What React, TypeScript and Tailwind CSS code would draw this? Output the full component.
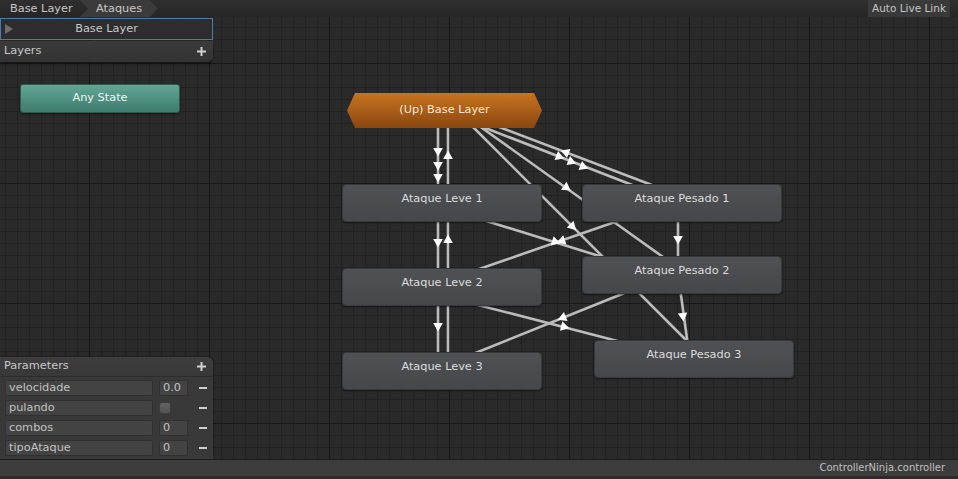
import React from "react";

type L = [number, number, number, number];
const lines: L[] = [
  [438, 120, 438, 190],
  [448, 120, 448, 190],
  [438, 215, 438, 275],
  [448, 215, 448, 275],
  [438, 300, 438, 360],
  [448, 300, 448, 360],
  [470, 122, 640, 188],
  [490, 123.5, 665, 190],
  [475, 123, 670, 262],
  [470, 124, 690, 344],
  [480, 219, 612, 260],
  [625, 218.5, 472, 271.5],
  [678, 215, 678, 265],
  [680, 288, 688, 346],
  [632, 290, 468, 356],
  [472, 303.4, 625, 343],
];

const arrows: [number, number, number][] = [
  [438, 152, 90],
  [438, 166, 90],
  [438, 178, 90],
  [448, 155, -90],
  [438, 243, 90],
  [448, 239, -90],
  [438, 327, 90],
  [560, 157, 21],
  [572, 162, 21],
  [584, 167, 21],
  [565, 152, 201],
  [567, 188, 35],
  [573, 227, 45],
  [556, 242, 17],
  [561, 241, 161],
  [678, 240, 90],
  [683, 317, 83],
  [562, 318, 158],
  [565, 327, 14.5],
];

function Plus() {
  return (
    <svg width="9" height="9" viewBox="0 0 9 9">
      <rect x="0" y="3.5" width="9" height="2" fill="#d0d0d0" />
      <rect x="3.5" y="0" width="2" height="9" fill="#d0d0d0" />
    </svg>
  );
}

function Node({ label, cls }: { label: string; cls: string }) {
  return (
    <div
      className={`absolute w-[200px] h-[38px] rounded-[4px] border border-[#38393c] bg-[linear-gradient(#4f5155,#45474b)] shadow-[0_1px_2px_rgba(0,0,0,0.5)] flex justify-center pt-[6px] leading-[16px] text-[#dcdcdc] z-10 ${cls}`}
    >
      {label}
    </div>
  );
}

function ParamRow({ name, value, check }: { name: string; value?: string; check?: boolean }) {
  return (
    <div className="h-[16px] flex items-center">
      <div className="ml-[5px] w-[148px] h-[16px] bg-[#434343] border border-[#303030] rounded-[2px] pl-[3px] leading-[14px] text-[#c2c2c2]">
        {name}
      </div>
      {check ? (
        <div className="ml-[6px] w-[29px] h-[16px] flex items-center">
          <div className="w-[12px] h-[12px] rounded-[3px] border border-[#3c3c3c] bg-[linear-gradient(#626262,#545454)]" />
        </div>
      ) : (
        <div className="ml-[6px] w-[29px] h-[16px] bg-[#434343] border border-[#303030] rounded-[2px] pl-[3px] leading-[14px] text-[#c2c2c2]">
          {value}
        </div>
      )}
      <div className="ml-[11px] w-[8px] h-[2px] bg-[#cfcfcf]" />
    </div>
  );
}

export default function App() {
  return (
    <div className="w-[958px] h-[479px] flex flex-col overflow-hidden bg-[#2a2a2a] font-['DejaVu_Sans',sans-serif] text-[11.3px] select-none">
      {/* top bar */}
      <div className="h-[17px] shrink-0 flex items-stretch bg-[linear-gradient(#2f2f2f,#262626)] text-[#c8c8c8] relative z-20">
        <div className="w-[80px] pl-[10px] flex items-center leading-none">Base Layer</div>
        <div className="w-[78px] bg-[#3b3b3b] [clip-path:polygon(0_0,70px_0,78px_50%,70px_100%,0_100%,8px_50%)] flex items-center pl-[16px] leading-none">
          Ataques
        </div>
        <div className="flex-1" />
        <div className="w-[82px] bg-[#3a3a3a] flex items-center justify-center leading-none text-[#c4c4c4] text-[10.5px]">
          Auto Live Link
        </div>
        <div className="w-[8px]" />
      </div>

      {/* main canvas */}
      <div className="relative flex-1 flex">
        <svg className="absolute inset-0" width="958" height="442" viewBox="0 0 958 442">
          <defs>
            <pattern id="minor" width="12" height="12" patternUnits="userSpaceOnUse" x="5" y="3">
              <path d="M0 0.5 H12 M0.5 0 V12" stroke="#222222" strokeWidth="1" fill="none" />
            </pattern>
            <pattern id="major" width="120" height="120" patternUnits="userSpaceOnUse" x="89" y="63">
              <path d="M0 0.5 H120 M0.5 0 V120" stroke="#181818" strokeWidth="1" fill="none" />
            </pattern>
          </defs>
          <g transform="translate(0,-17)">
            <rect x="0" y="0" width="958" height="479" fill="#2a2a2a" />
            <rect x="0" y="0" width="958" height="479" fill="url(#minor)" />
            <rect x="0" y="0" width="958" height="479" fill="url(#major)" />
            {lines.map(([x1, y1, x2, y2], i) => (
              <line key={i} x1={x1} y1={y1} x2={x2} y2={y2} stroke="#bcbcbc" strokeWidth="2.6" />
            ))}
            {arrows.map(([x, y, a], i) => (
              <polygon
                key={i}
                points="4.5,0 -4,-4.8 -4,4.8"
                fill="#ffffff"
                transform={`translate(${x},${y}) rotate(${a})`}
              />
            ))}
          </g>
        </svg>

        {/* left column */}
        <div className="relative z-20 w-[213px] flex flex-col justify-between pt-[1px]">
          <div className="flex flex-col gap-[1px]">
            <div className="h-[22px] border border-[#4a79b8] bg-[#2d2d2d] relative flex items-center justify-center text-[#c8c8c8]">
              <svg className="absolute left-[4px] top-[5px]" width="8" height="10" viewBox="0 0 8 10">
                <polygon points="0,0 8,5 0,10" fill="#6c6c6c" />
              </svg>
              Base Layer
            </div>
            <div className="h-[21px] rounded-br-[6px] bg-[linear-gradient(#3b3b3b,#333333)] shadow-[0_2px_3px_rgba(0,0,0,0.45)] flex items-center justify-between pl-[4px] pr-[7px] text-[#c8c8c8]">
              <span>Layers</span>
              <Plus />
            </div>
          </div>

          <div className="flex flex-col shadow-[0_0_3px_rgba(0,0,0,0.5)] rounded-tr-[6px]">
            <div className="h-[20px] rounded-tr-[6px] bg-[linear-gradient(#3e3e3e,#383838)] border-b border-[#2c2c2c] flex items-center justify-between pl-[4px] pr-[7px] text-[#c8c8c8]">
              <span>Parameters</span>
              <Plus />
            </div>
            <div className="bg-[#393939] pt-[3px] pb-[3px] flex flex-col gap-[4px]">
              <ParamRow name="velocidade" value="0.0" />
              <ParamRow name="pulando" check />
              <ParamRow name="combos" value="0" />
              <ParamRow name="tipoAtaque" value="0" />
            </div>
          </div>
        </div>

        {/* Any State */}
        <div className="absolute left-[20px] top-[67px] w-[160px] h-[29px] rounded-[3px] border border-[#2f5a50] bg-[linear-gradient(#62a694,#3e7b6d)] shadow-[0_1px_2px_rgba(0,0,0,0.5)] flex items-center justify-center text-[#eef4f2] z-10">
          Any State
        </div>

        {/* Up Base Layer */}
        <div className="absolute left-[347px] top-[76px] w-[195px] h-[35px] bg-[linear-gradient(#c8741f,#8a4710)] [clip-path:polygon(0_50%,8px_0,187px_0,195px_50%,187px_100%,8px_100%)] flex items-center justify-center text-[#f2e8de] z-10">
          (Up) Base Layer
        </div>

        <Node label="Ataque Leve 1" cls="left-[342px] top-[167px]" />
        <Node label="Ataque Leve 2" cls="left-[342px] top-[251px]" />
        <Node label="Ataque Leve 3" cls="left-[342px] top-[335px]" />
        <Node label="Ataque Pesado 1" cls="left-[582px] top-[167px]" />
        <Node label="Ataque Pesado 2" cls="left-[582px] top-[239px]" />
        <Node label="Ataque Pesado 3" cls="left-[594px] top-[323px]" />
      </div>

      {/* status bar */}
      <div className="h-[20px] shrink-0 flex flex-col border-t border-[#1e1e1e] relative z-20">
        <div className="flex-1 bg-[#3c3c3c] flex items-center justify-end pr-[13px] text-[#c0c0c0] text-[10px] leading-none">
          ControllerNinja.controller
        </div>
        <div className="h-[3px] bg-[#2c2c2c]" />
      </div>
    </div>
  );
}
